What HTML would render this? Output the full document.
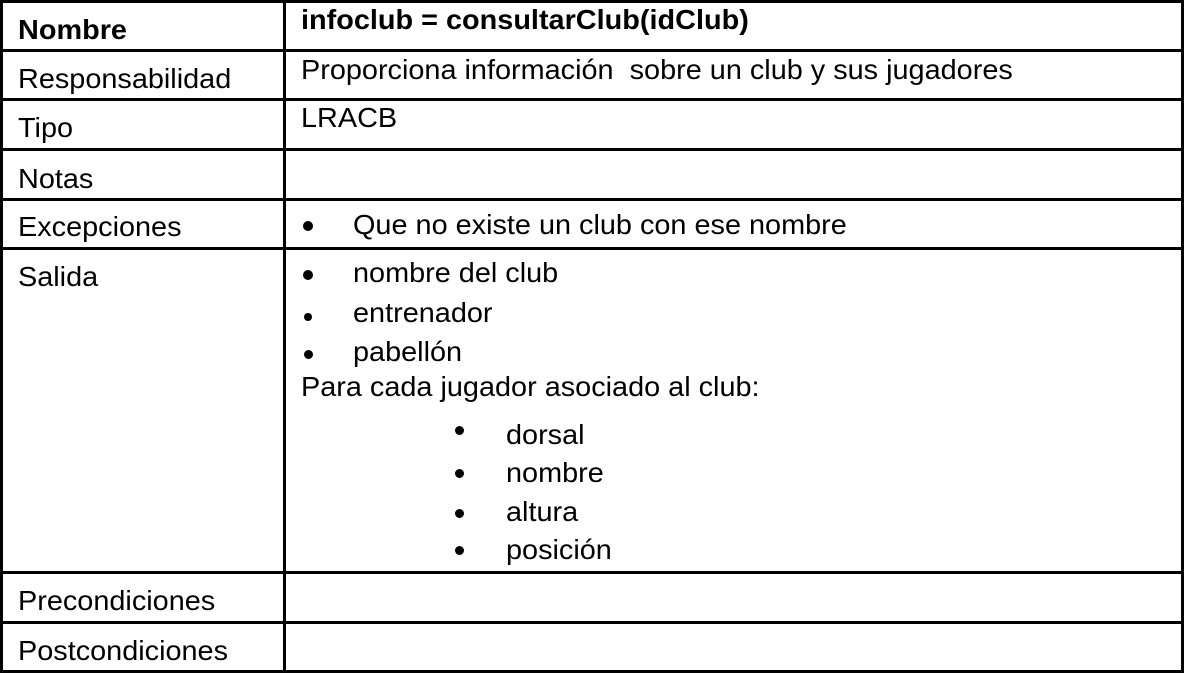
<!DOCTYPE html>
<html><head><meta charset="utf-8"><style>
body{margin:0;width:1184px;height:673px;background:#fff;position:relative;overflow:hidden;font-family:"Liberation Sans",sans-serif;font-size:28px;color:#000}
.h{position:absolute;left:0;width:1184px;height:3px;background:#000}
.v{position:absolute;top:0;height:673px;width:3px;background:#000}
.t{position:absolute;line-height:28px;white-space:nowrap;transform:scaleX(1.03) translateY(1px);transform-origin:0 0}
.b{font-weight:bold}
.d{position:absolute;width:10px;height:10px;border-radius:50%;background:#000}
</style></head><body>
<div class="h" style="top:0"></div>
<div class="h" style="top:49px"></div>
<div class="h" style="top:98px"></div>
<div class="h" style="top:148px"></div>
<div class="h" style="top:198px"></div>
<div class="h" style="top:247px"></div>
<div class="h" style="top:571px"></div>
<div class="h" style="top:621px"></div>
<div class="h" style="top:670px"></div>
<div class="v" style="left:0"></div>
<div class="v" style="left:283px"></div>
<div class="v" style="left:1181px"></div>

<div class="t b" style="left:18px;top:15px">Nombre</div>
<div class="t" style="left:18px;top:64px">Responsabilidad</div>
<div class="t" style="left:18px;top:113px">Tipo</div>
<div class="t" style="left:18px;top:164px">Notas</div>
<div class="t" style="left:18px;top:212px">Excepciones</div>
<div class="t" style="left:18px;top:262px">Salida</div>
<div class="t" style="left:18px;top:586px">Precondiciones</div>
<div class="t" style="left:18px;top:636px">Postcondiciones</div>

<div class="t b" style="left:301px;top:5px">infoclub = consultarClub(idClub)</div>
<div class="t" style="left:301px;top:55px">Proporciona información&nbsp; sobre un club y sus jugadores</div>
<div class="t" style="left:301px;top:103px">LRACB</div>
<div class="d" style="left:303px;top:221px"></div>
<div class="t" style="left:353px;top:210px">Que no existe un club con ese nombre</div>
<div class="d" style="left:303px;top:270px"></div>
<div class="t" style="left:353px;top:258px">nombre del club</div>
<div class="d" style="left:304px;top:313px;width:8px;height:8px"></div>
<div class="t" style="left:353px;top:298px">entrenador</div>
<div class="d" style="left:304px;top:350px;width:9px;height:9px"></div>
<div class="t" style="left:353px;top:337px">pabellón</div>
<div class="t" style="left:301px;top:372px">Para cada jugador asociado al club:</div>
<div class="d" style="left:455px;top:426px;width:9px;height:9px"></div>
<div class="t" style="left:506px;top:420px">dorsal</div>
<div class="d" style="left:455px;top:469px;width:9px;height:9px"></div>
<div class="t" style="left:506px;top:458px">nombre</div>
<div class="d" style="left:455px;top:509px;width:9px;height:9px"></div>
<div class="t" style="left:506px;top:497px">altura</div>
<div class="d" style="left:455px;top:546px;width:9px;height:9px"></div>
<div class="t" style="left:506px;top:535px">posición</div>
</body></html>
